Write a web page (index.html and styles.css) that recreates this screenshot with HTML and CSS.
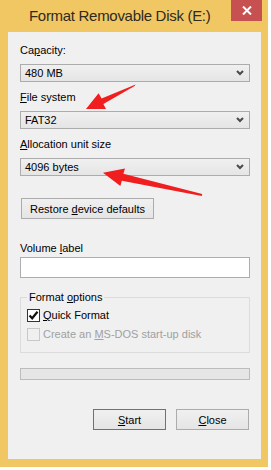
FILE: index.html
```html
<!DOCTYPE html>
<html lang="en">
<head>
    <meta charset="UTF-8">
    <meta name="viewport" content="width=device-width, initial-scale=1.0">
    <title>Format Removable Disk (E:)</title>
    <link rel="stylesheet" href="styles.css">
</head>
<body>
    <div class="window">
        <div class="titlebar">
            <span class="title">Format Removable Disk (E:)</span>
            <div class="close-btn">
                <svg width="10" height="9" viewBox="0 0 10 9">
                    <path d="M1 0.5 L9 8.5 M9 0.5 L1 8.5" stroke="#fff" stroke-width="2"/>
                </svg>
            </div>
        </div>
        <div class="content">
            <div class="label">Ca<u>p</u>acity:</div>
            <div class="combo">
                <span>480 MB</span>
                <svg class="chevron" width="8" height="6" viewBox="0 0 8 6"><path d="M1 1 L4 4 L7 1" stroke="#4a4a4a" stroke-width="2" fill="none"/></svg>
            </div>

            <div class="label spaced"><u>F</u>ile system</div>
            <div class="combo">
                <span>FAT32</span>
                <svg class="chevron" width="8" height="6" viewBox="0 0 8 6"><path d="M1 1 L4 4 L7 1" stroke="#4a4a4a" stroke-width="2" fill="none"/></svg>
            </div>

            <div class="label spaced"><u>A</u>llocation unit size</div>
            <div class="combo">
                <span>4096 bytes</span>
                <svg class="chevron" width="8" height="6" viewBox="0 0 8 6"><path d="M1 1 L4 4 L7 1" stroke="#4a4a4a" stroke-width="2" fill="none"/></svg>
            </div>

            <div class="button restore"><span>Restore <u>d</u>evice defaults</span></div>

            <div class="label volume">Volume <u>l</u>abel</div>
            <div class="textbox"></div>

            <fieldset class="group">
                <legend>Format <u>o</u>ptions</legend>
                <div class="check-row">
                    <span class="checkbox checked">
                        <svg width="11" height="11" viewBox="0 0 11 11"><path d="M1.5 5.5 L4.2 8.3 L9.5 1.8" stroke="#111" stroke-width="2.2" fill="none"/></svg>
                    </span>
                    <span><u>Q</u>uick Format</span>
                </div>
                <div class="check-row disabled">
                    <span class="checkbox"></span>
                    <span>Create an <u>M</u>S-DOS start-up disk</span>
                </div>
            </fieldset>

            <div class="progress"></div>

            <div class="actions">
                <div class="button default"><span><u>S</u>tart</span></div>
                <div class="button"><span><u>C</u>lose</span></div>
            </div>
        </div>

        <!-- red annotation arrows drawn over the dialog -->
        <svg class="arrows" width="268" height="467" viewBox="0 0 268 467">
            <polygon fill="#f01e1e" points="135.6,84.4 134.6,86 103.4,104 106,109 86,109 98.6,93.2 101.6,98.6"/>
            <polygon fill="#f01e1e" points="201.8,196 202.2,194 123.4,173.8 125,168.5 103,172.7 120.4,186 121.8,180.8"/>
        </svg>
    </div>
</body>
</html>
```

FILE: styles.css
```css
body {
    margin: 0;
    background: #fff;
    font-family: "Liberation Sans", Arial, sans-serif;
    font-size: 11px;
    color: #000;
}
.window {
    position: relative;
    width: 268px;
    height: 467px;
    box-sizing: border-box;
    background: #f1c764;
    padding: 0 7px 8px 8px;
    display: flex;
    flex-direction: column;
}
.titlebar {
    height: 32px;
    display: flex;
    justify-content: space-between;
    align-items: flex-start;
}
.title {
    margin: 7px 0 0 21px;
    font-size: 15px;
    letter-spacing: -0.3px;
    color: #2e2a1e;
}
.close-btn {
    width: 31px;
    height: 21px;
    margin-right: -1px;
    background: #c75050;
    display: flex;
    align-items: center;
    justify-content: center;
}
.content {
    flex: 1;
    background: #f0f0f0;
    padding: 11px 11px 0 12px;
}
.label {
    height: 14px;
    line-height: 14px;
    margin-bottom: 7px;
}
.label.spaced {
    margin-top: 8px;
}
.combo {
    height: 18px;
    box-sizing: border-box;
    border: 1px solid #acacac;
    background: linear-gradient(#f0f0f0, #e5e5e5);
    display: flex;
    align-items: center;
    justify-content: space-between;
    padding: 0 5px 0 4px;
}
.button {
    height: 21px;
    box-sizing: border-box;
    border: 1px solid #acacac;
    background: linear-gradient(#f0f0f0, #e5e5e5);
    display: flex;
    align-items: center;
    justify-content: center;
}
.restore {
    width: 133px;
    margin: 22px 0 0 1px;
}
.label.volume {
    margin: 22px 0 2px;
}
.textbox {
    height: 21px;
    box-sizing: border-box;
    border: 1px solid #abadb3;
    background: #fff;
}
.group {
    margin: 12px 0 0;
    padding: 3px 0 10px 6px;
    border: 1px solid #dcdcdc;
}
.group legend {
    margin-left: 0;
    padding: 0 2px;
    line-height: 14px;
}
.check-row {
    height: 16px;
    display: flex;
    align-items: center;
    gap: 3px;
}
.check-row + .check-row {
    margin-top: 3px;
}
.checkbox {
    width: 13px;
    height: 13px;
    box-sizing: border-box;
    border: 1px solid #333;
    background: #fff;
    display: flex;
    align-items: center;
    justify-content: center;
}
.disabled {
    color: #a0a0a0;
}
.disabled .checkbox {
    border-color: #c8c8c8;
    background: #f0f0f0;
}
.progress {
    margin-top: 15px;
    height: 12px;
    box-sizing: border-box;
    border: 1px solid #bcbcbc;
    background: #e6e6e6;
}
.actions {
    margin-top: 29px;
    display: flex;
    justify-content: flex-end;
    gap: 10px;
    padding-right: 1px;
}
.actions .button {
    width: 73px;
}
.button.default {
    border-color: #3c7fb1;
}
.arrows {
    position: absolute;
    top: 0;
    left: 0;
    pointer-events: none;
}
```
